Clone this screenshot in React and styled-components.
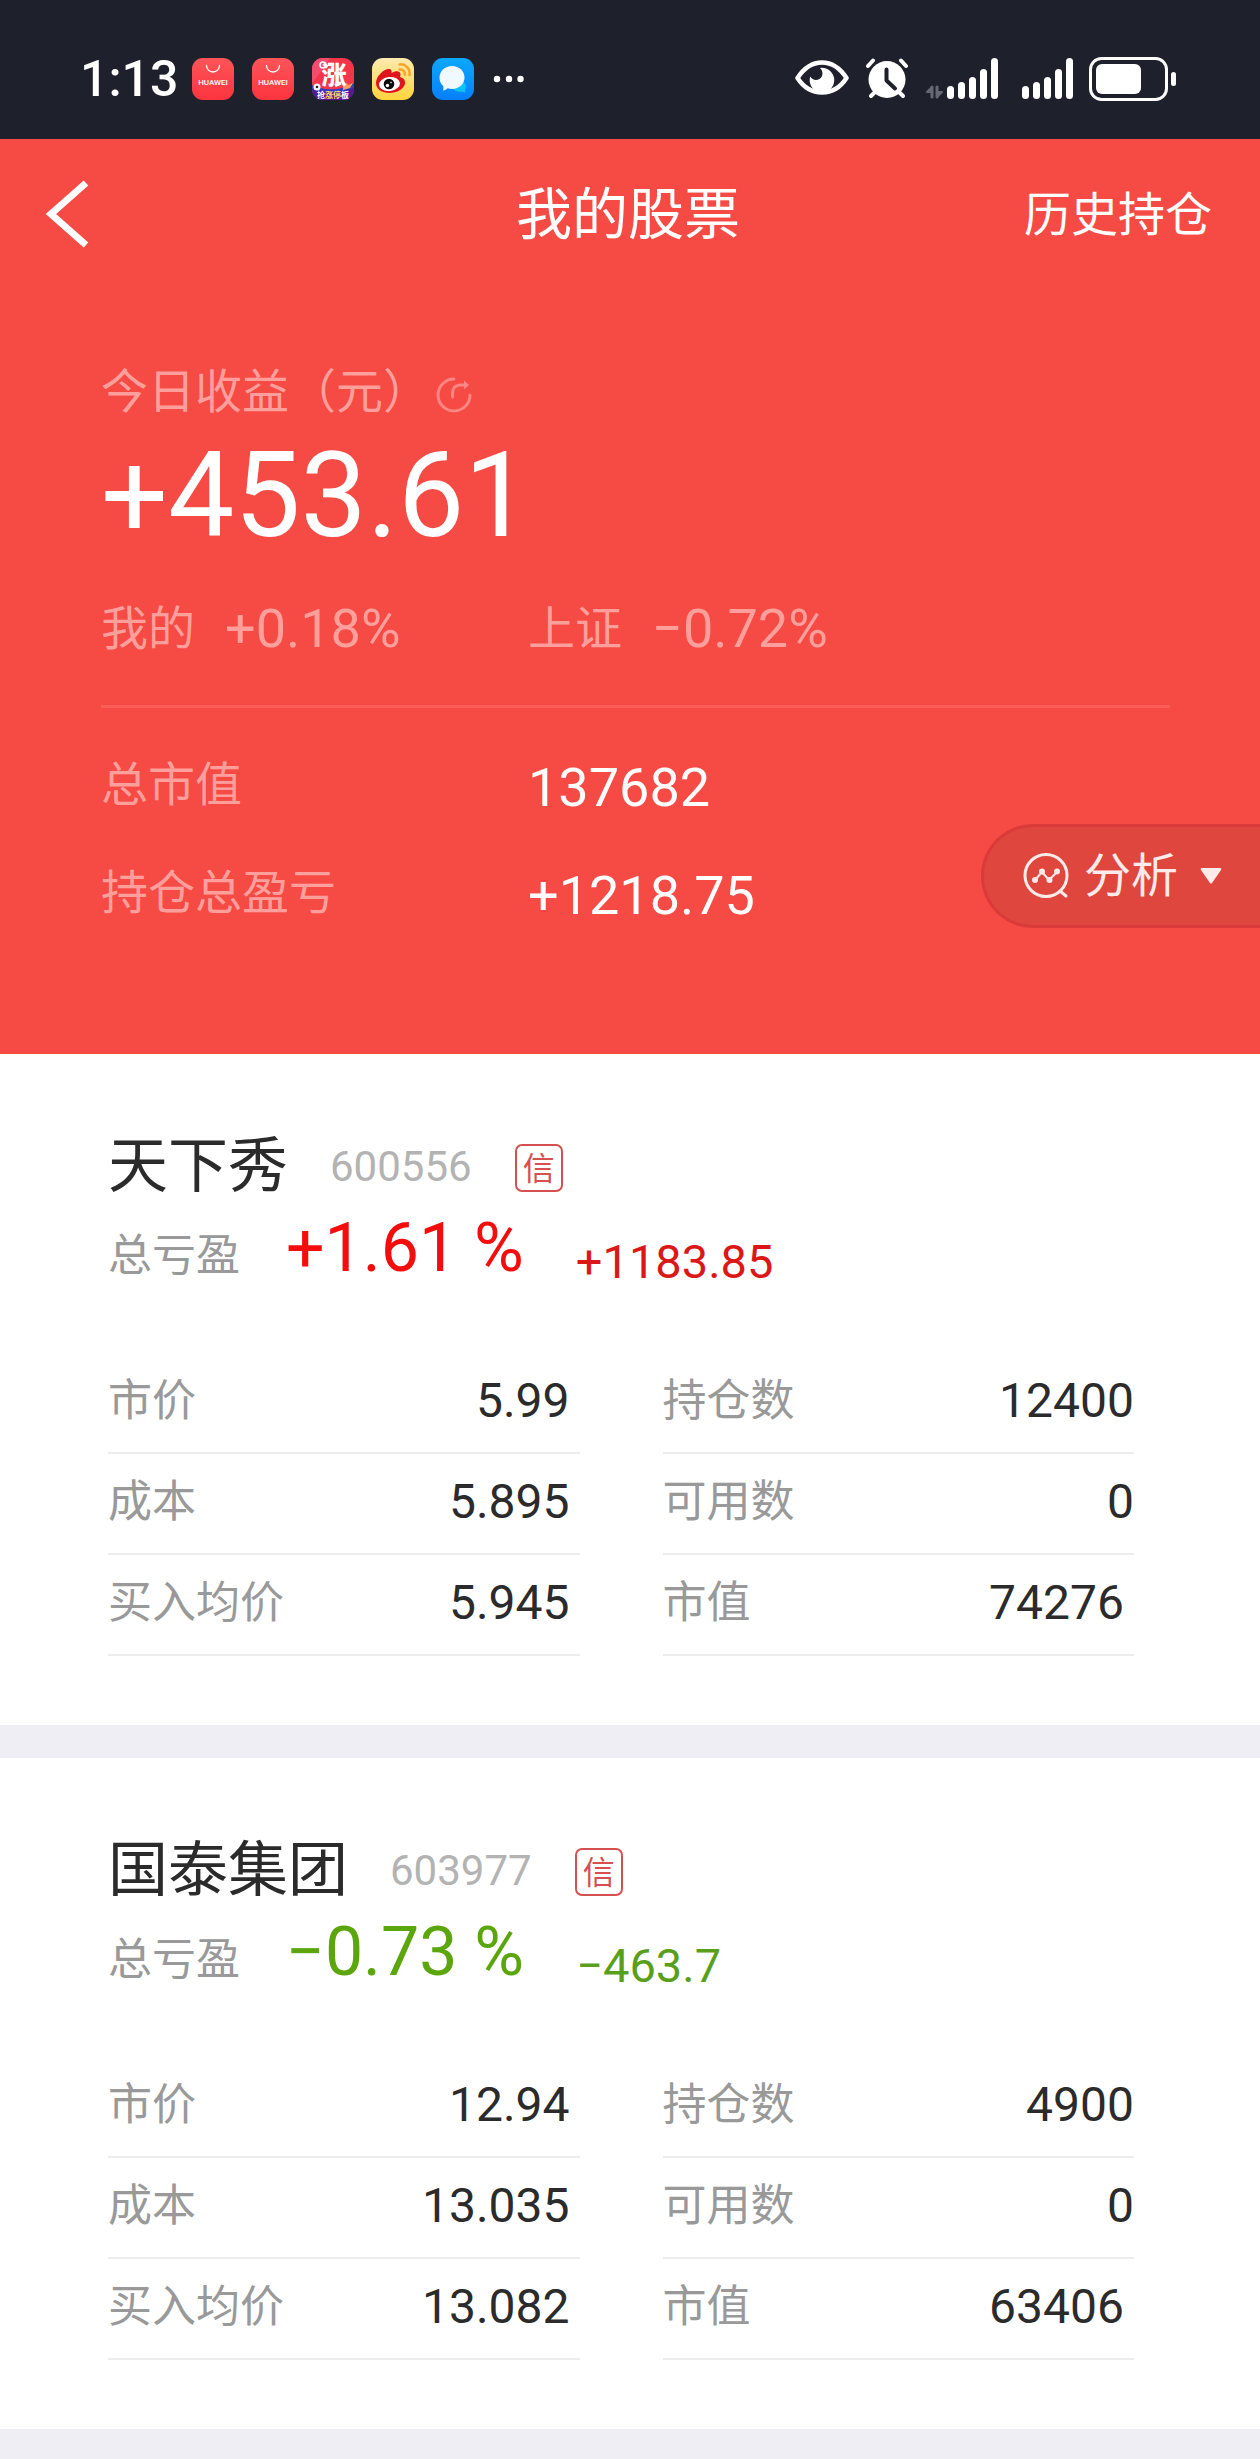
import React from 'react'
import styled, { createGlobalStyle } from 'styled-components'

const GlobalStyle = createGlobalStyle`
  * {
    box-sizing: border-box;
  }

  body {
    margin: 0;
    background: #efeef4;
    font-family: Roboto, 'Noto Sans CJK SC', sans-serif;
    color: #2b2b2b;
  }

  h1, h2, dl, dd, p {
    margin: 0;
    font-weight: 400;
  }

  button {
    border: 0;
    padding: 0;
    background: none;
    font: inherit;
    color: inherit;
    cursor: pointer;
  }

  svg {
    display: block;
    flex: none;
  }
`

const StatusBar = styled.div`
  display: flex;
  justify-content: space-between;
  align-items: center;
  height: 139px;
  padding: 19px 84px 0 80px;
  background: #1e212c;
  color: #fff;
`

const StatusGroup = styled.div`
  display: flex;
  align-items: center;
  gap: ${props => props.$gap}px;
`

const Clock = styled.span`
  width: 94px;
  font-size: 50px;
  line-height: 60px;
  font-weight: 500;
  white-space: nowrap;
`

const Header = styled.header`
  position: relative;
  padding-bottom: 125px;
  background: #f64a44;
  color: #fff;
`

const NavBar = styled.nav`
  display: grid;
  grid-template-columns: 1fr auto 1fr;
  align-items: center;
  height: 151px;
  padding: 0 48px 0 44px;
`

const BackButton = styled.button`
  justify-self: start;
`

const Title = styled.h1`
  font-size: 56px;
  line-height: 64px;
`

const HistoryLink = styled.a`
  justify-self: end;
  font-size: 47px;
  line-height: 60px;
  color: inherit;
  text-decoration: none;
`

const Summary = styled.section`
  padding: 72px 90px 0 101px;
`

const Caption = styled.div`
  display: flex;
  align-items: center;
  gap: 6px;
  font-size: 47px;
  line-height: 60px;
  color: #ff9f9c;
`

const Today = styled.p`
  margin-top: 14px;
  font-size: 118px;
  line-height: 120px;
`

const Stats = styled.div`
  display: grid;
  grid-template-columns: 427px 1fr;
  line-height: 60px;
`

const Rates = styled(Stats)`
  margin-top: 43px;
  padding-bottom: 46px;
  border-bottom: 3px solid #fc5d59;
`

const Rate = styled.div`
  display: flex;
  gap: 30px;
  color: #ff9f9c;
`

const StatLabel = styled.span`
  font-size: 47px;
  color: #ff9f9c;
`

const StatValue = styled.span`
  font-size: 54px;
`

const Totals = styled(Stats)`
  row-gap: 42px;
  margin-top: 47px;

  ${StatValue} {
    line-height: 66px;
  }
`

const AnalyseButton = styled.button`
  && {
    position: absolute;
    right: 0;
    top: 685px;
    display: flex;
    align-items: center;
    height: 104px;
    padding: 0 38px 0 39px;
    border: 3px solid #da3b3a;
    border-right: 0;
    border-radius: 52px 0 0 52px;
    background: #df463e;
    color: #fdebea;
    font-size: 47px;
    line-height: 60px;
  }

  span {
    margin: 0 22px 0 15px;
  }
`

const CardList = styled.main`
  display: grid;
  gap: 33px;
  padding-bottom: 30px;
`

const Card = styled.article`
  padding: 83px 126px 69px 108px;
  background: #fff;
`

const CardHead = styled.div`
  display: flex;
  align-items: center;
  line-height: 60px;
`

const Name = styled.h2`
  font-size: 60px;
`

const Code = styled.span`
  margin: 0 43px 0 42px;
  font-size: 42px;
  color: #b3b3b3;
`

const CreditTag = styled.span`
  width: 48px;
  height: 48px;
  margin-top: 2px;
  border: 2px solid #d5504e;
  border-radius: 7px;
  font-size: 32px;
  line-height: 46px;
  text-align: center;
  color: #d5504e;
`

const Profit = styled.div`
  display: flex;
  align-items: flex-end;
  margin-top: 11px;
  color: ${props => props.$loss ? '#5ba60d' : '#f30d0d'};
`

const ProfitLabel = styled.span`
  font-size: 44px;
  line-height: 64px;
  color: #999;
`

const Percent = styled.span`
  margin: 0 52px 0 46px;
  font-size: 68px;
  line-height: 80px;
`

const Amount = styled.span`
  font-size: 47px;
  line-height: 52px;
  color: ${props => props.$loss ? '#599f1b' : '#dc1717'};
`

const Details = styled.dl`
  display: grid;
  grid-template-columns: 1fr 1fr;
  column-gap: 83px;
  margin-top: 65px;
`

const Detail = styled.div`
  display: flex;
  justify-content: space-between;
  align-items: center;
  height: 101px;
  padding: 0 ${props => props.$inset ? 10 : 0}px 4px 0;
  border-bottom: 2px solid #ededed;
  line-height: 60px;

  dt {
    font-size: 44px;
    color: #999;
  }

  dd {
    font-size: 48px;
  }
`

const HuaweiIcon = ({ id }) => (
  <svg width="42" height="42" viewBox="0 0 42 42">
    <defs>
      <linearGradient id={id} x1="0" y1="0" x2="0" y2="1">
        <stop offset="0" stopColor="#ff5558" />
        <stop offset="1" stopColor="#fb343f" />
      </linearGradient>
    </defs>
    <rect width="42" height="42" rx="11" fill={`url(#${id})`} />
    <path d="M14.500 7.500a6.500 6.500 0 0 0 13 0" fill="none" stroke="#fff" strokeWidth="1.300" strokeLinecap="round" />
    <text x="21" y="27" textAnchor="middle" fontSize="8" fontWeight="500" fill="#fff">HUAWEI</text>
  </svg>
)

const StockAppIcon = () => (
  <svg width="42" height="42" viewBox="0 0 42 42">
    <defs>
      <clipPath id="stockClip"><rect width="42" height="42" rx="11" /></clipPath>
    </defs>
    <g clipPath="url(#stockClip)">
      <rect width="42" height="42" fill="#f5364a" />
      <path d="M0 0h18L0 26z" fill="#f34d6d" />
      <path d="M0 27c9 5 28 7 42-2v17H0z" fill="#2d3fc4" />
      <path d="M0 31c12 4 28 4 42-1v12H0z" fill="#541a92" />
      <path d="M31 28l4-3 1 2 5-2-3 5-7 2z" fill="#ff9b62" />
      <text x="22" y="26" textAnchor="middle" fontSize="25" fontWeight="900" fill="#fff">涨</text>
      <circle cx="11" cy="7" r="3" fill="none" stroke="#fff" strokeWidth="1.500" />
      <circle cx="5" cy="29" r="3.500" fill="#fff" />
      <circle cx="5" cy="29" r="1.300" fill="#222" />
      <text x="21" y="40" textAnchor="middle" fontSize="8" fontWeight="700" fill="#fff">抢<tspan fill="#ffe36b">涨停</tspan>板</text>
    </g>
  </svg>
)

const WeiboIcon = () => (
  <svg width="42" height="42" viewBox="0 0 42 42">
    <defs>
      <linearGradient id="weiboBg" x1="0" y1="0" x2="0" y2="1">
        <stop offset="0" stopColor="#fdeab0" />
        <stop offset="1" stopColor="#fed43c" />
      </linearGradient>
    </defs>
    <rect width="42" height="42" rx="11" fill="url(#weiboBg)" />
    <path d="M4 25c0-7 8-14 12.500-14 3 0 3.500 2 3 4 4-2.500 9-2.500 9 1.500 0 1-.3 1.700-.5 2.500 3.500 1 5.500 3 5 6.500C32 31 25 35 17.500 35 10 35 4 31.500 4 25z" fill="#e0141d" />
    <ellipse cx="17.500" cy="26" rx="10.500" ry="7" fill="#fff" transform="rotate(-7 17.500 26)" />
    <circle cx="17" cy="26" r="5.300" fill="#0c0c0c" />
    <circle cx="15.500" cy="27.500" r="1.700" fill="#fff" />
    <circle cx="19" cy="24.500" r=".8" fill="#fff" />
    <path d="M27.500 6.500c6-1 11 4.500 10 10.500M27.500 11.500c3.500-.5 5.800 2.200 5.300 5.300" fill="none" stroke="#f6a42c" strokeWidth="2.500" strokeLinecap="round" />
  </svg>
)

const MessageIcon = () => (
  <svg width="42" height="42" viewBox="0 0 42 42">
    <defs>
      <linearGradient id="messageBg" x1="0" y1="0" x2="0" y2="1">
        <stop offset="0" stopColor="#0ba8fd" />
        <stop offset="1" stopColor="#087ffb" />
      </linearGradient>
    </defs>
    <rect width="42" height="42" rx="11" fill="url(#messageBg)" />
    <path d="M29 23c4 1 6.500 5 4 8.500l.6 3-3.600-1c-4 1-8-1-9-3z" fill="#0bc4fb" />
    <path d="M20 8c7 0 12.500 5 12.500 11.500S27 31 20 31c-1.500 0-3-.2-4.300-.7-1.200 1.300-2.700 2-4.700 2.200.5-1.200.5-2.700.2-4.500C8.700 26 7.500 23 7.500 19.500 7.500 13 13 8 20 8z" fill="#f0f9ff" />
  </svg>
)

const MoreIcon = () => (
  <svg width="32" height="8" viewBox="0 0 32 8" fill="#fff">
    <circle cx="5" cy="4" r="3.200" />
    <circle cx="17" cy="4" r="3.200" />
    <circle cx="28.500" cy="4" r="3.200" />
  </svg>
)

const EyeIcon = () => (
  <svg width="54" height="42" viewBox="0 0 54 42">
    <path d="M2.500 20C9 10 17 4.500 27 4.500S45 10 51.500 20C45 30 37 34.500 27 34.500S9 30 2.500 20z" fill="none" stroke="#fff" strokeWidth="4.500" strokeLinejoin="round" />
    <path d="M25 10a12.300 12.300 0 1 1-9.800 8.500c2 3.500 6 4.500 9.200 2.500 4-2.500 4-8 .6-11z" fill="#fff" />
  </svg>
)

const AlarmIcon = () => (
  <svg width="44" height="42" viewBox="0 0 44 42">
    <g fill="none" stroke="#fff" strokeLinecap="round">
      <path d="M3 8l5-5.500M41 8l-5-5.500" strokeWidth="4" />
      <path d="M6 38l5-5M38 38l-5-5" strokeWidth="4" />
    </g>
    <circle cx="22" cy="21.500" r="18.500" fill="#fff" />
    <path d="M21.500 11.500v11l8.500 8" fill="none" stroke="#1e212c" strokeWidth="4" strokeLinecap="round" strokeLinejoin="round" />
  </svg>
)

const bars = [13, 17, 22, 30, 41]

const SignalIcon = () => (
  <svg width="51" height="42" viewBox="0 0 51 42" fill="#fff">
    {bars.map((h, i) => (
      <rect key={h} x={i * 11} y={41 - h} width="7" height={h} rx="3.500" />
    ))}
  </svg>
)

const DataIcon = () => (
  <svg width="18" height="42" viewBox="0 0 18 42">
    <g fill="#666972" stroke="#666972" strokeLinejoin="round" strokeLinecap="round">
      <path d="M7 39V29" strokeWidth="3" />
      <path d="M7 29v5H2z" strokeWidth="2" />
      <path d="M12 29v10" strokeWidth="3" />
      <path d="M12 39v-5h5z" strokeWidth="2" />
    </g>
  </svg>
)

const BatteryIcon = () => (
  <svg width="87" height="44" viewBox="0 0 87 44">
    <rect x="1.500" y="1.500" width="76" height="41" rx="11" fill="none" stroke="#fff" strokeWidth="3" />
    <rect x="7" y="7" width="45" height="30" rx="6" fill="#fff" />
    <rect x="82" y="15" width="5" height="14" rx="2.500" fill="#fff" />
  </svg>
)

const BackIcon = () => (
  <svg width="46" height="70" viewBox="0 0 46 70">
    <path d="M42 3L7 34l35 31" fill="none" stroke="#fff" strokeWidth="7" />
  </svg>
)

const RefreshIcon = () => (
  <svg width="36" height="42" viewBox="0 -6 36 42">
    <g fill="none" stroke="#ff8682" strokeWidth="3" strokeLinecap="round" strokeLinejoin="round">
      <path d="M18 2A16 16 0 1 0 34 18" />
      <path d="M16.500 20v-4c0-5 3-8 8-8h5" />
    </g>
    <path d="M28 3.500l5 4.500-5 4.500z" fill="#ff8682" />
  </svg>
)

const AnalyseIcon = () => (
  <svg width="46" height="46" viewBox="0 0 46 46">
    <g fill="none" stroke="#fdebea" strokeWidth="3" strokeLinecap="round" strokeLinejoin="round">
      <circle cx="23" cy="22.500" r="21" />
      <path d="M37 38l6 5" />
      <path d="M12 27l7-8 7 8 8-8" strokeWidth="2" />
    </g>
    <g fill="#fdebea">
      <circle cx="12" cy="27" r="3" />
      <circle cx="19" cy="18.500" r="3" />
      <circle cx="26.500" cy="27" r="3" />
      <circle cx="34" cy="18.500" r="3" />
    </g>
  </svg>
)

const ArrowDown = () => (
  <svg width="22" height="18" viewBox="0 0 22 18">
    <path d="M2 1h18q2 0 1 2l-9 13q-1 1-2 0L1 3Q0 1 2 1z" fill="#fdebea" />
  </svg>
)

const stocks = [
  {
    name: '天下秀',
    code: '600556',
    percent: '+1.61 %',
    amount: '+1183.85',
    details: [
      ['市价', '5.99'],
      ['持仓数', '12400'],
      ['成本', '5.895'],
      ['可用数', '0'],
      ['买入均价', '5.945'],
      ['市值', '74276'],
    ],
  },
  {
    name: '国泰集团',
    code: '603977',
    percent: '−0.73 %',
    amount: '−463.7',
    loss: true,
    details: [
      ['市价', '12.94'],
      ['持仓数', '4900'],
      ['成本', '13.035'],
      ['可用数', '0'],
      ['买入均价', '13.082'],
      ['市值', '63406'],
    ],
  },
]

const StockCard = ({ stock }) => (
  <Card>
    <CardHead>
      <Name>{stock.name}</Name>
      <Code>{stock.code}</Code>
      <CreditTag>信</CreditTag>
    </CardHead>
    <Profit $loss={stock.loss}>
      <ProfitLabel>总亏盈</ProfitLabel>
      <Percent>{stock.percent}</Percent>
      <Amount $loss={stock.loss}>{stock.amount}</Amount>
    </Profit>
    <Details>
      {stock.details.map(([label, value], i) => (
        <Detail key={label} $inset={i % 2 === 0 || label === '市值'}>
          <dt>{label}</dt>
          <dd>{value}</dd>
        </Detail>
      ))}
    </Details>
  </Card>
)

const App = () => (
  <>
    <GlobalStyle />
    <StatusBar>
      <StatusGroup $gap={18}>
        <Clock>1:13</Clock>
        <HuaweiIcon id="huaweiOne" />
        <HuaweiIcon id="huaweiTwo" />
        <StockAppIcon />
        <WeiboIcon />
        <MessageIcon />
        <MoreIcon />
      </StatusGroup>
      <StatusGroup $gap={16}>
        <EyeIcon />
        <AlarmIcon />
        <StatusGroup $gap={24}>
          <StatusGroup $gap={4}>
            <DataIcon />
            <SignalIcon />
          </StatusGroup>
          <SignalIcon />
        </StatusGroup>
        <BatteryIcon />
      </StatusGroup>
    </StatusBar>
    <Header>
      <NavBar>
        <BackButton aria-label="返回"><BackIcon /></BackButton>
        <Title>我的股票</Title>
        <HistoryLink href="#history">历史持仓</HistoryLink>
      </NavBar>
      <Summary>
        <Caption>
          今日收益（元）
          <RefreshIcon />
        </Caption>
        <Today>+453.61</Today>
        <Rates>
          <Rate>
            <StatLabel>我的</StatLabel>
            <StatValue>+0.18%</StatValue>
          </Rate>
          <Rate>
            <StatLabel>上证</StatLabel>
            <StatValue>−0.72%</StatValue>
          </Rate>
        </Rates>
        <Totals>
          <StatLabel>总市值</StatLabel>
          <StatValue>137682</StatValue>
          <StatLabel>持仓总盈亏</StatLabel>
          <StatValue>+1218.75</StatValue>
        </Totals>
      </Summary>
      <AnalyseButton>
        <AnalyseIcon />
        <span>分析</span>
        <ArrowDown />
      </AnalyseButton>
    </Header>
    <CardList>
      {stocks.map(stock => <StockCard key={stock.code} stock={stock} />)}
    </CardList>
  </>
)

export default App
